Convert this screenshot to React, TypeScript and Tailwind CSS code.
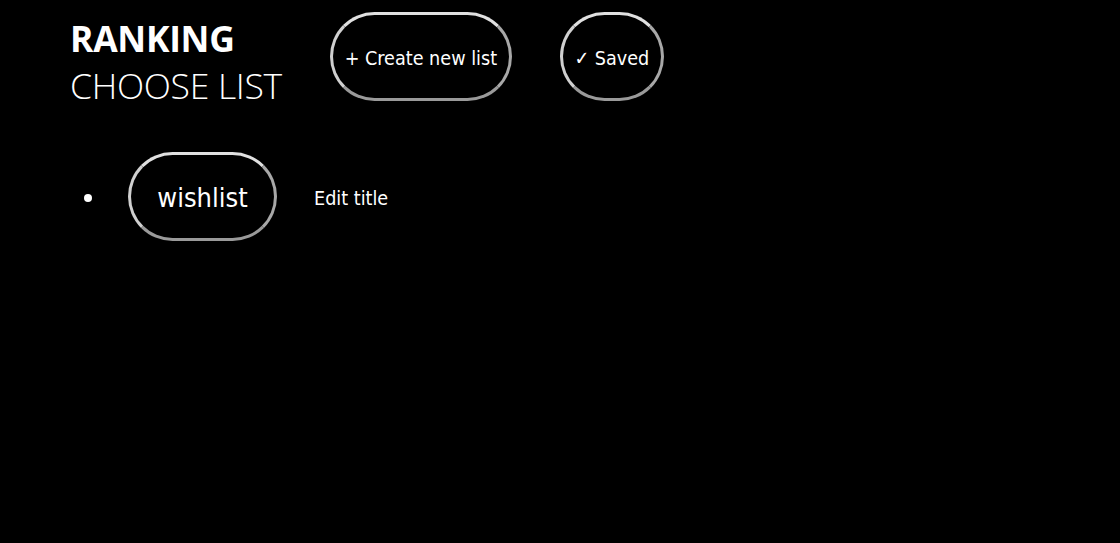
import React from "react";

const pill =
  "rounded-full border-[3px] border-t-[#e0e0e0] border-l-[#d0d0d0] border-b-[#9a9a9a] border-r-[#a8a8a8] bg-black text-white pt-[4px]";

export default function App() {
  return (
    <div
      className="min-h-[543px] w-full bg-black text-white pl-[70px] pt-[12px]"
      style={{ fontFamily: "'DejaVu Sans Condensed', 'Liberation Sans', sans-serif" }}
    >
      <div className="flex items-start gap-[48px]">
        <div className="flex flex-col pt-[3px]" style={{ fontFamily: "'Open Sans', 'Noto Sans', sans-serif" }}>
          <h1 className="text-[35.5px] font-bold leading-[47px] tracking-[-0.3px]">RANKING</h1>
          <h2 className="text-[35.5px] font-light leading-[47px] tracking-[-0.3px]">CHOOSE LIST</h2>
        </div>
        <button className={`${pill} h-[89px] w-[182px] text-[19.6px]`}>+ Create new list</button>
        <button className={`${pill} h-[89px] w-[104px] text-[19.6px]`}>✓ Saved</button>
      </div>
      <ul className="mt-[43px] pl-[14px]">
        <li className="flex items-center">
          <span className="mr-[36px] mt-[2px] h-[8px] w-[8px] rounded-full bg-white" />
          <button className={`${pill} h-[89px] w-[149px] text-[27px]`}>wishlist</button>
          <button className="ml-[37px] pt-[4px] text-[19.6px] text-white">Edit title</button>
        </li>
      </ul>
    </div>
  );
}
